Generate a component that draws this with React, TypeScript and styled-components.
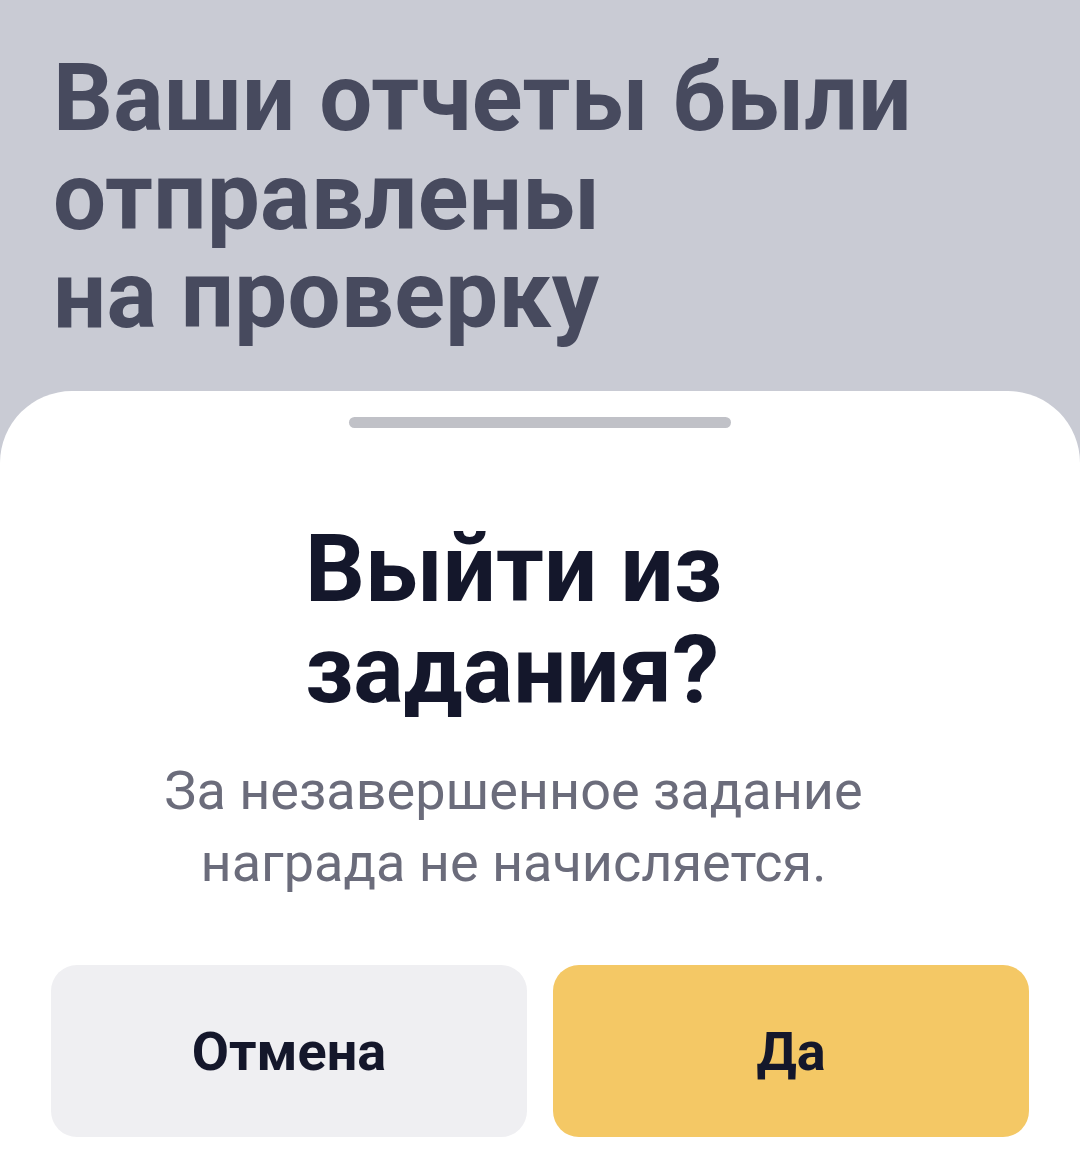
import React from "react";
import styled, { createGlobalStyle } from "styled-components";

const Global = createGlobalStyle`
  html, body { margin: 0; padding: 0; }
  body { background: #c9cbd4; font-family: Roboto, "Noto Sans", sans-serif; }
  #root { min-height: 100vh; }
`;

const Page = styled.div`
  display: flex;
  flex-direction: column;
  width: 1080px;
  height: 1161px;
  overflow: hidden;
  background: #c9cbd4;
`;

const Backdrop = styled.div`
  height: 391px;
  padding: 49px 0 0 53px;
  box-sizing: border-box;
`;

const BackTitle = styled.h1`
  margin: 0;
  font-family: Roboto, sans-serif;
  font-weight: 700;
  font-size: 94px;
  line-height: 98.5px;
  color: #474a5e;
  letter-spacing: 0.3px;
`;

const Sheet = styled.div`
  flex: 1;
  background: #ffffff;
  border-radius: 72px 72px 0 0;
  display: flex;
  flex-direction: column;
  align-items: center;
  padding-top: 26px;
`;

const Handle = styled.div`
  width: 382px;
  height: 11px;
  border-radius: 6px;
  background: #c0c1c7;
`;

const Body = styled.div`
  align-self: stretch;
  display: flex;
  flex-direction: column;
  align-items: center;
  padding-right: 53px;
`;

const Title = styled.h2`
  margin: 91px 0 0;
  text-align: left;
  font-family: Roboto, sans-serif;
  font-weight: 700;
  font-size: 94px;
  line-height: 101px;
  color: #14172b;
`;

const Subtitle = styled.p`
  margin: 34px 0 0;
  text-align: center;
  font-family: Roboto, sans-serif;
  font-weight: 400;
  font-size: 54px;
  line-height: 72px;
  color: #6b6c7b;
`;

const Actions = styled.div`
  display: grid;
  grid-template-columns: 1fr 1fr;
  gap: 26px;
  width: 100%;
  box-sizing: border-box;
  padding: 0 51px;
  margin-top: 66px;
`;

const ActionButton = styled.button<{ $primary?: boolean }>`
  height: 172px;
  border: none;
  border-radius: 26px;
  background: ${(p) => (p.$primary ? "#f4c865" : "#efeff2")};
  color: #14172b;
  font-family: Roboto, sans-serif;
  font-weight: 700;
  font-size: 54px;
  cursor: pointer;
`;

export default function App() {
  return (
    <Page>
      <Global />
      <Backdrop>
        <BackTitle>
          Ваши отчеты были
          <br />
          отправлены
          <br />
          на проверку
        </BackTitle>
      </Backdrop>
      <Sheet>
        <Handle />
        <Body>
          <Title>
            Выйти из
            <br />
            задания?
          </Title>
          <Subtitle>
            За незавершенное задание
            <br />
            награда не начисляется.
          </Subtitle>
        </Body>
        <Actions>
          <ActionButton>Отмена</ActionButton>
          <ActionButton $primary>Да</ActionButton>
        </Actions>
      </Sheet>
    </Page>
  );
}
